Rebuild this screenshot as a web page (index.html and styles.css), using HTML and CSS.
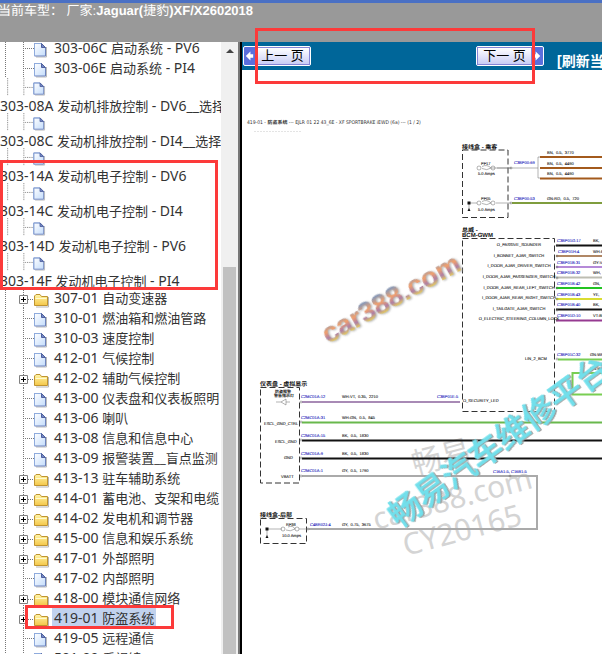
FILE: index.html
```html
<!DOCTYPE html>
<html lang="zh-CN">
<head>
<meta charset="utf-8">
<title>电路图浏览</title>
<link rel="stylesheet" href="styles.css">
</head>
<body>
<svg class="defs" aria-hidden="true">
  <defs>
    <linearGradient id="paper" x1="0" y1="0" x2="1" y2="1"><stop offset="0" stop-color="#ffffff"/><stop offset="1" stop-color="#c3dcfb"/></linearGradient>
    <linearGradient id="gold" x1="0" y1="0" x2="0" y2="1"><stop offset="0" stop-color="#fff6a8"/><stop offset="1" stop-color="#f4c648"/></linearGradient>
    <symbol id="leaf" viewBox="0 0 54 20">
      <path d="M5.500 0V20M23.500 0V20M25 10.500H34" stroke="#777" stroke-dasharray="1 1" fill="none"/>
      <path d="M36 19H46.500V9" stroke="#bbb" fill="none"/>
      <path d="M34.500 5.500H41.500L45.500 9.500V18H34.500Z" fill="url(#paper)" stroke="#6c83bd"/>
      <path d="M34.500 18V5.500H41.500" stroke="#8eabdd" fill="none"/>
      <path d="M41.500 5.500V9.500H45.500Z" fill="#7288c4" stroke="#50619e"/>
    </symbol>
    <symbol id="branch" viewBox="0 0 54 20">
      <path d="M5.500 0V20M23.500 0V7M23.500 17V20M28 11.500H34" stroke="#777" stroke-dasharray="1 1" fill="none"/>
      <path d="M19.500 7.500H27.500V15.500H19.500Z" fill="#fff" stroke="#808080"/>
      <path d="M21 11.500H26M23.500 9V14" stroke="#000"/>
      <path d="M36 19H48.500V9" stroke="#b5b5b5" fill="none"/>
      <path d="M34.500 17.500V8L36 6.500H40L41.500 8.500H47.500V17.500Z" fill="url(#gold)" stroke="#bf9430"/>
      <path d="M35.500 10.500H46.500" stroke="#fffbd0"/>
    </symbol>
  </defs>
</svg>

<header class="banner">
  <p class="vehicle">当前车型： 厂家:<b>Jaguar(</b>捷豹<b>)XF/X2602018</b></p>
</header>

<div class="frames">
  <aside class="sidebar">
    <nav class="tree">
      <ul>
        <li><svg><use href="#leaf"/></svg><a href="#">303-06C <i>启动系统</i> - PV6</a></li>
        <li><svg><use href="#leaf"/></svg><a href="#">303-06E <i>启动系统</i> - PI4</a></li>
        <li class="wrap"><svg><use href="#leaf"/></svg><a href="#">303-08A <i>发动机排放控制</i> - DV6__<i>选择性催化</i></a></li>
        <li class="wrap"><svg><use href="#leaf"/></svg><a href="#">303-08C <i>发动机排放控制</i> - DI4__<i>选择性催化</i></a></li>
        <li class="wrap"><svg><use href="#leaf"/></svg><a href="#">303-14A <i>发动机电子控制</i> - DV6</a></li>
        <li class="wrap"><svg><use href="#leaf"/></svg><a href="#">303-14C <i>发动机电子控制</i> - DI4</a></li>
        <li class="wrap"><svg><use href="#leaf"/></svg><a href="#">303-14D <i>发动机电子控制</i> - PV6</a></li>
        <li class="wrap"><svg><use href="#leaf"/></svg><a href="#">303-14F <i>发动机电子控制</i> - PI4</a></li>
        <li><svg><use href="#branch"/></svg><a href="#">307-01 <i>自动变速器</i></a></li>
        <li><svg><use href="#leaf"/></svg><a href="#">310-01 <i>燃油箱和燃油管路</i></a></li>
        <li><svg><use href="#leaf"/></svg><a href="#">310-03 <i>速度控制</i></a></li>
        <li><svg><use href="#leaf"/></svg><a href="#">412-01 <i>气候控制</i></a></li>
        <li><svg><use href="#branch"/></svg><a href="#">412-02 <i>辅助气候控制</i></a></li>
        <li><svg><use href="#leaf"/></svg><a href="#">413-00 <i>仪表盘和仪表板照明</i></a></li>
        <li><svg><use href="#leaf"/></svg><a href="#">413-06 <i>喇叭</i></a></li>
        <li><svg><use href="#leaf"/></svg><a href="#">413-08 <i>信息和信息中心</i></a></li>
        <li><svg><use href="#leaf"/></svg><a href="#">413-09 <i>报警装置__盲点监测</i></a></li>
        <li><svg><use href="#branch"/></svg><a href="#">413-13 <i>驻车辅助系统</i></a></li>
        <li><svg><use href="#branch"/></svg><a href="#">414-01 <i>蓄电池、支架和电缆</i></a></li>
        <li><svg><use href="#branch"/></svg><a href="#">414-02 <i>发电机和调节器</i></a></li>
        <li><svg><use href="#branch"/></svg><a href="#">415-00 <i>信息和娱乐系统</i></a></li>
        <li><svg><use href="#branch"/></svg><a href="#">417-01 <i>外部照明</i></a></li>
        <li><svg><use href="#leaf"/></svg><a href="#">417-02 <i>内部照明</i></a></li>
        <li><svg><use href="#branch"/></svg><a href="#">418-00 <i>模块通信网络</i></a></li>
        <li><svg><use href="#branch"/></svg><a href="#" class="selected">419-01 <i>防盗系统</i></a></li>
        <li><svg><use href="#leaf"/></svg><a href="#">419-05 <i>远程通信</i></a></li>
        <li><svg><use href="#leaf"/></svg><a href="#">501-09 <i>后视镜</i></a></li>
      </ul>
    </nav>
    <div class="scrollbar"><span class="arrow"></span><span class="thumb"></span></div>
  </aside>

  <main class="viewer">
    <div class="toolbar">
      <button class="page prev" type="button"><svg class="tip" viewBox="0 0 12 18"><path d="M2 9L7 4V7H10V11H7V14Z" fill="#fff"/></svg><span>上一 页</span></button>
      <button class="page next" type="button"><span>下一 页</span><svg class="tip" viewBox="0 0 12 18"><path d="M9 9L4 4V7H1V11H4V14Z" fill="#fff"/></svg></button>
      <a class="refresh" href="#">[刷新当前页]</a>
    </div>

    <svg class="diagram" width="360" height="584" viewBox="242 70 360 584">
      <defs>
        <linearGradient id="rainbow" x1="0" y1="0" x2="0" y2="1"><stop offset="0.2" stop-color="#8799b8"/><stop offset="0.45" stop-color="#f2a06c"/><stop offset="0.65" stop-color="#ac7ea6"/><stop offset="0.85" stop-color="#f3e04c"/></linearGradient>
      </defs>

      <text class="title" x="247" y="124">419-01 - <tspan class="strong">防盗系统</tspan> --- EJLR 01 22 43_6E - XF SPORTBRAKE iEWD (6a) --- (1 / 2)</text>
      <path d="M254 131.500H301" stroke="#e4e4e4" stroke-dasharray="2 1"/>

      <g class="mark-gray">
        <text transform="translate(415 475) rotate(-15)">畅易</text>
        <text transform="translate(376 530) rotate(-15)">car388.com</text>
        <text transform="translate(406 556) rotate(-15)">CY20165</text>
      </g>

      <g class="box">
        <path d="M462.500 150H508V217.500H462.500Z"/>
        <path d="M462.500 238.500H554.500V411.500H462.500Z"/>
        <path d="M260.500 387.500H299.500V483H260.500Z"/>
        <path d="M260.500 518.500H306.500V543.500H260.500Z"/>
      </g>

      <g class="wire">
        <path stroke="#a35a1c" d="M540 157H602M540 168H602M540 178.500H602"/>
        <path stroke="#7f9d3e" d="M512 203H602"/>
        <path stroke="#111" d="M556 245.500H602M556 309.500H602M302 440.500H602M302 458.500H602"/>
        <path stroke="#b08765" d="M556 256H602"/>
        <path stroke="#b58ad8" d="M556 267H602"/>
        <path stroke="#bdbdb2" d="M556 277.500H602"/>
        <path stroke="#22c322" d="M556 288H602"/>
        <path stroke="#d9dc31" d="M556 299H602"/>
        <path stroke="#963a91" d="M556 320.500H602"/>
        <path stroke="#79ce52" d="M558 359.500H602M602 373H572.500V394.500H602"/>
        <path stroke="#a88ab5" d="M302 402H460"/>
        <path stroke="#69b84c" d="M302 422.500H602"/>
        <path stroke="#aaa" d="M302 476H537V529H309"/>
      </g>
      <g class="thin">
        <path d="M497 168H536M540 157H538V178H540M538 168H536M496 203H511M469 203V211M469 203H477M482 166.500Q487 164 491 168Q487 171 482 168.500M482 201.500Q487 199 491 203Q487 206 482 203.500M491 168H511M276 402H281L286 399V405L281 402M286 402H290M267 529V536M267 529H282M288 527Q293 525 295 529Q290 532 286 530M299 529H309"/>
        <circle cx="479" cy="168" r="2"/><circle cx="493" cy="168" r="2"/><circle cx="479" cy="203" r="2"/><circle cx="493" cy="203" r="2"/>
        <circle cx="283" cy="529" r="2"/><circle cx="297" cy="529" r="2"/><circle cx="511" cy="168" r="1"/><circle cx="511" cy="203" r="1"/>
        <circle cx="557" cy="245.500" r="1"/><circle cx="557" cy="256" r="1"/><circle cx="557" cy="267" r="1"/><circle cx="557" cy="278" r="1"/><circle cx="557" cy="288" r="1"/><circle cx="557" cy="299" r="1"/><circle cx="557" cy="310" r="1"/><circle cx="557" cy="320" r="1"/><circle cx="557" cy="359" r="1"/>
        <circle cx="301" cy="402" r="1"/><circle cx="301" cy="422" r="1"/><circle cx="301" cy="440" r="1"/><circle cx="301" cy="458" r="1"/><circle cx="301" cy="476" r="1"/><circle cx="308" cy="529" r="1"/><circle cx="510" cy="476" r="1"/>
      </g>
      <path d="M467.500 201.500h3v3h-3zM265.500 527.500h3v3h-3zM467.500 211h3l-1.500 -3zM265.500 538h3l-1.500 -3z" fill="#111"/>

      <g class="head">
        <text x="462" y="149">接线盒 - 乘客</text>
        <text x="462" y="232">总威 -</text>
        <text x="462" y="237">BCM-GWM</text>
        <text x="260" y="386">仪表盘 - 虚拟显示</text>
        <text x="260" y="517">接线盒-后部</text>
        <text class="small" x="275" y="393">防盗报警</text>
        <text class="small" x="274" y="397">警告指示灯</text>
      </g>
      <g class="label">
        <text x="481" y="165">PF17</text><text x="478" y="175">5.0 Amps</text>
        <text x="481" y="200">PF05</text><text x="478" y="211">5.0 Amps</text>
        <text x="547" y="154">BN,&#160; 0.5,&#160; 3770</text><text x="547" y="165">BN,&#160; 0.5,&#160; 4490</text><text x="547" y="175">BN,&#160; 0.5,&#160; 4490</text>
        <text x="547" y="200">GN-RD,&#160; 0.5,&#160; 720</text>
        <text x="593" y="242">BK,</text><text x="593" y="253">WH-BN</text><text x="593" y="264">GY-VT</text><text x="593" y="274">WH,</text><text x="593" y="285">GN,</text><text x="593" y="296">YE,</text><text x="593" y="306">BK,</text><text x="593" y="317">VT-BN</text>
        <text x="590" y="356">GN-WH</text><text x="590" y="370">GN-WH</text>
        <text x="463" y="402">O_SECURITY_LED</text><text x="525" y="360">LIN_2_BCM</text>
        <text x="342" y="398">WH-VT,&#160; 0.35,&#160; 2210</text><text x="342" y="419">WH-GN,&#160; 0.5,&#160; 845</text><text x="342" y="437">BK,&#160; 0.5,&#160; 1830</text><text x="342" y="455">BK,&#160; 0.5,&#160; 1830</text><text x="342" y="472">GY,&#160; 0.5,&#160; 1790</text><text x="342" y="526">GY,&#160; 0.75,&#160; 3675</text>
        <text x="264" y="425">ESCL_GND_CTRL</text><text x="275" y="443">ESCL_GND</text><text x="284" y="459">GND</text><text x="281" y="478">VBATT</text>
        <text x="286" y="526">RF38</text><text x="282" y="537">10.0 Amps</text>
      </g>
      <g class="label pins">
        <text x="519" y="246">O_PASSIVE_SOUNDER</text><text x="519" y="257">I_BONNET_AJAR_SWITCH</text><text x="519" y="267">I_DOOR_AJAR_DRIVER_SWITCH</text><text x="519" y="278">I_DOOR_AJAR_PASSENGER_SWITCH</text><text x="519" y="289">I_DOOR_AJAR_REAR_LEFT_SWITCH</text><text x="519" y="299">I_DOOR_AJAR_REAR_RIGHT_SWITCH</text><text x="519" y="310">I_TAILGATE_AJAR_SWITCH</text><text x="519" y="320">O_ELECTRIC_STEERING_COLUMN_LOCK</text>
      </g>
      <g class="label conn">
        <text x="514" y="164">C3BP00-69</text><text x="514" y="200">C3BP00-53</text>
        <text x="557" y="242">C3BP01G-17</text><text x="558" y="253">C3BP01H-4</text><text x="557" y="264">C3BP01B-31</text><text x="557" y="274">C3BP01B-32</text><text x="557" y="285">C3BP01B-42</text><text x="557" y="296">C3BP01B-43</text><text x="557" y="306">C3BP01B-40</text><text x="557" y="317">C3BP01D-10</text><text x="557" y="356">C3BP01C-32</text>
        <text x="437" y="398">C3BP01E-5</text>
        <text x="301" y="398">C2MC01A-12</text><text x="301" y="419">C2MC01A-31</text><text x="301" y="437">C2MC01A-15</text><text x="301" y="455">C2MC01A-9</text><text x="301" y="472">C2MC01A-1</text><text x="310" y="526">C4BR02J-4</text><text x="493" y="473">C16A1-5, C16B1-5</text>
      </g>

      <text class="mark-rainbow" transform="translate(328 344) rotate(-29)">car388.com</text>
      <text class="mark-cyan" transform="translate(399 529) rotate(-36)">畅易汽车维修平台</text>
    </svg>
  </main>
</div>

<div class="callout callout-engine"></div>
<div class="callout callout-paging"></div>
<div class="callout callout-security"></div>
</body>
</html>
```
FILE: styles.css
```css
* { box-sizing: border-box; }

html, body { height: 100%; }

body {
  margin: 0;
  position: relative;
  display: flex;
  flex-direction: column;
  overflow: hidden;
  background: #fff;
  font-family: "Noto Sans", "Noto Sans CJK SC", sans-serif;
}

.defs { position: absolute; width: 0; height: 0; }

.banner {
  flex: none;
  height: 42px;
  border-top: 3px solid #4a70c4;
  background: #999;
}

.vehicle {
  margin: 0 0 0 -2px;
  color: #fff;
  font: 13px/16px "Liberation Sans", "Noto Sans CJK SC", sans-serif;
  text-rendering: geometricPrecision;
  white-space: nowrap;
}

.frames { flex: 1; min-height: 0; display: flex; }

.sidebar {
  flex: none;
  width: 242px;
  display: flex;
  border-right: 2px solid #000;
}

.tree { flex: 1; min-width: 0; overflow: hidden; }

.tree ul { margin: -4px 0 0; padding: 0; list-style: none; }

.tree li { display: flex; height: 20px; white-space: nowrap; }

.tree svg { flex: none; width: 54px; height: 20px; }

.tree a {
  height: 19px;
  color: #333;
  font-size: 14px;
  line-height: 19px;
  text-decoration: none;
}

.tree i { font-size: 13px; font-style: normal; }

.tree .wrap { flex-direction: column; height: 35px; }
.tree .wrap svg { height: 18px; overflow: hidden; }
.tree .wrap use { height: 20px; }
.tree .wrap a { height: 17px; line-height: 20px; }

.tree .selected {
  margin-left: -2px;
  padding: 0 2px;
  background: #c1d2ee;
}

.scrollbar {
  flex: none;
  width: 19px;
  padding: 7px 4px 0 2px;
  display: flex;
  flex-direction: column;
  background: linear-gradient(90deg, #f0f0f0 17px, #777 17px);
}

.arrow {
  align-self: center;
  border: 4px solid transparent;
  border-top: 0;
  border-bottom-color: #444;
}

.thumb { flex: 1; margin-top: 214px; background: #c1c1c1; }

.viewer { flex: 1; min-width: 0; overflow: hidden; }

.toolbar {
  height: 28px;
  padding: 0 1px;
  display: flex;
  align-items: center;
  background: #069;
}

.page {
  flex: none;
  width: 68px;
  height: 20px;
  padding: 0;
  display: flex;
  align-items: stretch;
  border: 1px solid #fff;
  border-radius: 2px;
  background: #5b6fdc;
  color: #000;
  font: 13px/16px "Liberation Sans", "Noto Sans CJK SC", sans-serif;
}

.page span {
  flex: 1;
  border: 1px solid #8585d5;
  background: linear-gradient(#fff, #c9cdf5);
  line-height: 16px;
}

.page .tip { flex: none; width: 11px; height: 18px; }

.next { margin-left: 165px; }

.refresh {
  margin: 9px 0 0 13px;
  color: #fff;
  font: bold 14px/16px "Liberation Sans", "Noto Sans CJK SC", sans-serif;
  text-decoration: none;
  white-space: nowrap;
}

.diagram {
  display: block;
  font-family: "Liberation Sans", "Noto Sans CJK SC", sans-serif;
  text-rendering: geometricPrecision;
}

.title { font: 5px "DejaVu Sans Condensed", "Noto Sans CJK SC", sans-serif; fill: #333; }
.strong { font-weight: bold; }
.head { font-size: 6px; font-weight: bold; fill: #111; }
.small { font-size: 4px; }
.label { font-size: 4px; fill: #222; stroke: #222; stroke-width: 0.1; }
.pins { text-anchor: middle; }
.conn { fill: #22b; stroke: #22b; }

.box { fill: none; stroke: #333; stroke-dasharray: 6 3; }
.wire { fill: none; stroke-width: 2; }
.thin { fill: none; stroke: #666; stroke-width: 0.5; }

.mark-gray { font: 30px "Noto Sans", "Noto Sans CJK SC", sans-serif; fill: #d4d4d4; }

.mark-rainbow {
  font-size: 28px;
  font-weight: bold;
  fill: url(#rainbow);
  filter: drop-shadow(1px 1px 1px #aaa);
}

.mark-cyan {
  font-size: 33px;
  font-weight: 500;
  fill: #72dfeb;
  stroke: #72dfeb;
  stroke-width: 0.5;
  filter: drop-shadow(1px 1px 0 #999);
}

.callout { position: absolute; border: 3px solid #fc3a3a; pointer-events: none; }
.callout-engine { left: 0; top: 160px; width: 218px; height: 130px; }
.callout-paging { left: 255px; top: 28px; width: 280px; height: 56px; }
.callout-security { left: 25px; top: 605px; width: 149px; height: 24px; }
```
